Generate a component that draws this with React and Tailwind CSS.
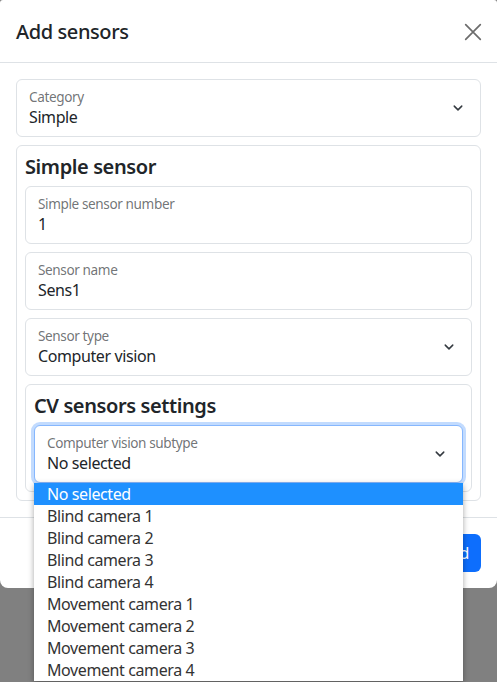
import React from "react";

const options = [
  "No selected",
  "Blind camera 1",
  "Blind camera 2",
  "Blind camera 3",
  "Blind camera 4",
  "Movement camera 1",
  "Movement camera 2",
  "Movement camera 3",
  "Movement camera 4",
];

function Chevron() {
  return (
    <svg width="16" height="12" viewBox="0 0 16 16" className="shrink-0">
      <path d="M3 5.5l5 5 5-5" fill="none" stroke="#343a40" strokeWidth="2" strokeLinecap="round" strokeLinejoin="round" />
    </svg>
  );
}

function Floating({ label, value, select, focused }) {
  return (
    <div
      className={
        "flex items-center h-[58px] rounded-md border bg-white pl-3 pr-[14px] " +
        (focused
          ? "border-[#86b7fe] shadow-[0_0_0_3px_rgba(13,110,253,0.25)]"
          : "border-[#dee2e6]")
      }
    >
      <div className="flex-1 flex flex-col pt-[1px]">
        <span className="text-[13.6px] leading-[17px] text-[#212529a6]">{label}</span>
        <span className="text-base leading-6 text-[#212529]">{value}</span>
      </div>
      {select && <Chevron />}
    </div>
  );
}

export default function App() {
  return (
    <div className="relative h-[682px] overflow-hidden bg-[#808080] font-['Noto_Sans',sans-serif] tracking-[-0.4px]">
      <div className="bg-white rounded-t-[3px] rounded-b-lg">
        {/* HEADER */}
        <div className="flex items-center justify-between h-[63px] px-4 pt-[1px] border-b border-[#dee2e6]">
          <h1 className="text-xl font-medium text-[#212529]">Add sensors</h1>
          <svg width="18" height="18" viewBox="0 0 16 16" className="mr-[-1px]">
            <path d="M1.5 1.5l13 13M14.5 1.5l-13 13" stroke="#6c6c6c" strokeWidth="1.5" strokeLinecap="round" />
          </svg>
        </div>

        {/* BODY */}
        <div className="p-4">
          <Floating label="Category" value="Simple" select />
          <div className="mt-2 rounded-md border border-[#dee2e6] p-2">
            <h2 className="text-xl font-semibold leading-[26px] text-[#212529] mb-[6px]">Simple sensor</h2>
            <Floating label="Simple sensor number" value="1" />
            <div className="mt-2">
              <Floating label="Sensor name" value="Sens1" />
            </div>
            <div className="mt-2">
              <Floating label="Sensor type" value="Computer vision" select />
            </div>
            <div className="mt-2 rounded-md border border-[#dee2e6] p-2">
              <h2 className="text-xl font-semibold leading-[26px] text-[#212529] mb-[6px]">CV sensors settings</h2>
              <Floating label="Computer vision subtype" value="No selected" select focused />
            </div>
          </div>
        </div>

        {/* FOOTER */}
        <div className="flex justify-end border-t border-[#dee2e6] px-4 py-4">
          <button className="h-[38px] px-3 rounded-md bg-[#0d6efd] text-white text-base">Add</button>
        </div>
      </div>

      {/* OPEN SELECT LIST */}
      <div className="absolute left-[34px] top-[483px] w-[429px] bg-white shadow-[0_2px_6px_rgba(0,0,0,0.35)]">
        {options.map((o, i) => (
          <div
            key={o}
            className={
              "h-[22px] px-[13px] text-base leading-[23px] " +
              (i === 0 ? "bg-[#1e90ff] text-white" : "text-[#333]")
            }
          >
            {o}
          </div>
        ))}
      </div>
    </div>
  );
}
